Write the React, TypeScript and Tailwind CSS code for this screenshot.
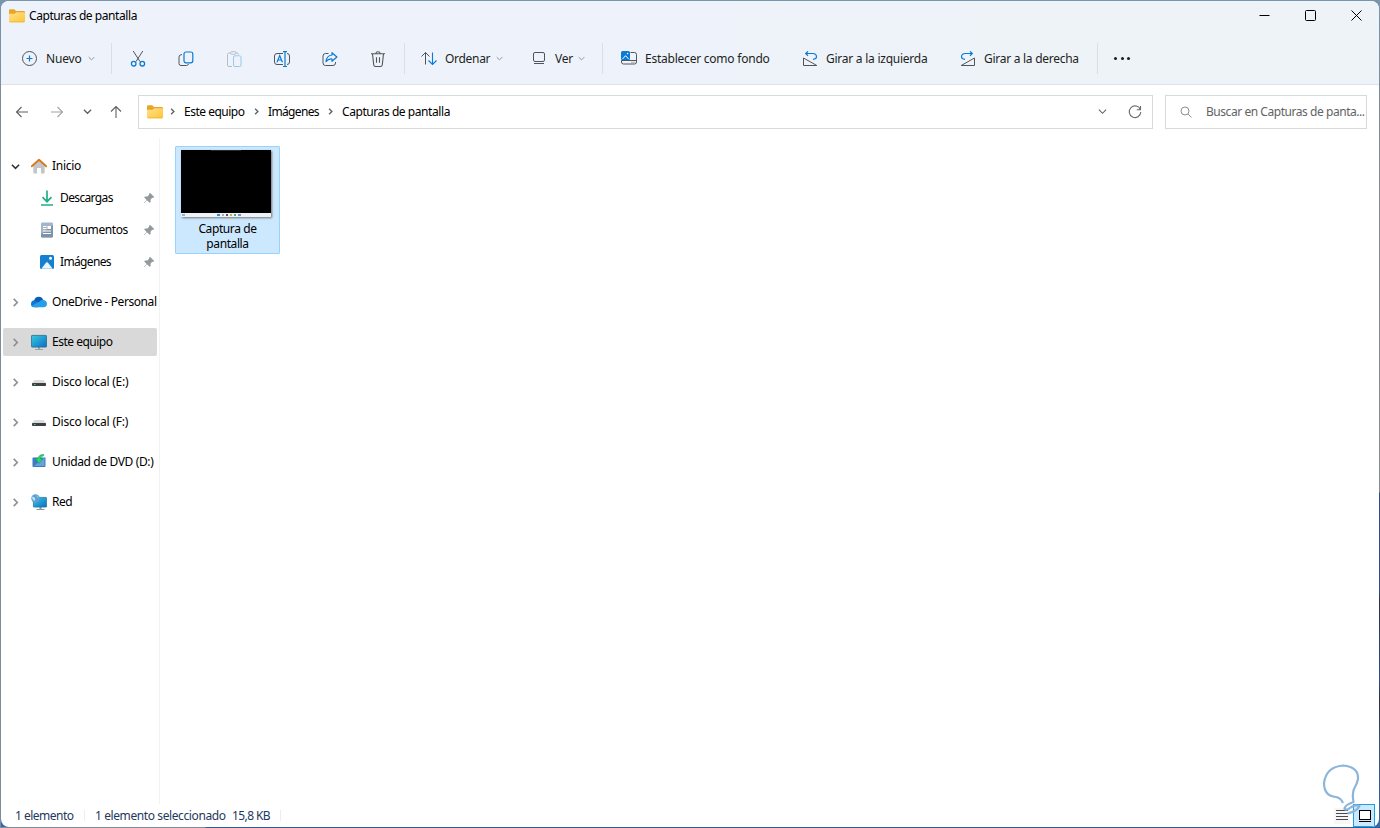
import type { ReactNode } from "react";
import clsx from "clsx";

const INK = "#50555a";
const BLUE = "#0a7bd4";

type IconProps = { className?: string };

function Chevron({ dir, className }: { dir: "down" | "right"; className?: string }) {
  return (
    <svg viewBox="0 0 10 10" fill="none" stroke="currentColor" className={clsx("shrink-0", className)}>
      <path d={dir === "down" ? "M1 3l4 4 4-4" : "M3 1l4 4-4 4"} />
    </svg>
  );
}

function FolderIcon({ className }: IconProps) {
  return (
    <svg viewBox="0 0 16 14" className={clsx("h-3.5 w-4 shrink-0", className)}>
      <defs>
        <linearGradient id="folder" x1="0" y1="0" x2="1" y2="1">
          <stop offset="0" stopColor="#ffe08a" />
          <stop offset="1" stopColor="#fdc637" />
        </linearGradient>
      </defs>
      <path d="M0 1.5Q0 .3 1.2.3h4L7 2h7.8Q16 2 16 3.2V10H0z" fill="#e8a526" />
      <path d="M0 4.7h5.6L7.3 3.2h7.5q1.2 0 1.2 1v8q0 1-1 1H1q-1 0-1-1z" fill="url(#folder)" />
      <path d="M.6 12.9h14.8" stroke="#e9b02f" strokeWidth=".7" />
    </svg>
  );
}

function Icon16({ children, className }: { children: ReactNode; className?: string }) {
  return (
    <svg viewBox="0 0 16 16" fill="none" className={clsx("h-4 w-4 shrink-0", className)}>
      {children}
    </svg>
  );
}

function NewIcon() {
  return (
    <Icon16>
      <circle cx="7.5" cy="7.5" r="7" stroke={INK} />
      <path d="M7.5 4.500v6M4.500 7.500h6" stroke={BLUE} strokeWidth="1.2" />
    </Icon16>
  );
}

function CutIcon() {
  return (
    <Icon16>
      <path d="M3.200 0l6.900 10.700M12.800 0L5.900 10.700" stroke={INK} />
      <circle cx="3.700" cy="12.700" r="2.300" stroke={BLUE} strokeWidth="1.3" />
      <circle cx="12.300" cy="12.700" r="2.300" stroke={BLUE} strokeWidth="1.3" />
    </Icon16>
  );
}

function CopyIcon() {
  return (
    <Icon16>
      <path d="M4 3.700H3q-2 .300-2 2.300v6.500q0 2 2 2h5.500q1.500 0 2-1.500" stroke={INK} />
      <rect x="6" y="1" width="8.800" height="10.800" rx="2" stroke={BLUE} strokeWidth="1.2" />
    </Icon16>
  );
}

function PasteIcon() {
  return (
    <Icon16>
      <path d="M4.500 2H3Q1.500 2 1.500 3.500V14q0 1.500 1.500 1.500h3M9.500 2H11q1.500 0 1.500 1.500" stroke="#b9bec2" />
      <rect x="4.500" y=".6" width="5.500" height="2.600" rx="1.2" stroke="#b9bec2" />
      <rect x="7.500" y="4.800" width="7.500" height="10.700" rx="1.500" stroke="#96c9ed" />
    </Icon16>
  );
}

function RenameIcon() {
  return (
    <Icon16>
      <path d="M9 2.500H3Q.5 2.500.5 5v6q0 2.500 2.500 2.500h6M13 2.500q2.500 0 2.500 2.500v6q0 2.500-2.500 2.500" stroke={INK} />
      <path d="M3 11.200L5.700 4.500l2.700 6.700M4 9h3.500" stroke={BLUE} strokeWidth="1.2" />
      <path d="M11 .8v14.400M9 .6h4M9 15.500h4" stroke={BLUE} strokeWidth="1.2" />
    </Icon16>
  );
}

function ShareIcon() {
  return (
    <Icon16>
      <path d="M6.500 2.500h-3Q1 2.500 1 5v7q0 2.500 2.500 2.500h7.500q2.500 0 2.500-2.500v-1" stroke={INK} />
      <path d="M10 1.700L14.900 6 10 10.300V8q-3.500-.5-6 2.700Q4.500 4.700 10 4z" stroke={BLUE} strokeWidth="1.2" strokeLinejoin="round" />
    </Icon16>
  );
}

function TrashIcon() {
  return (
    <Icon16>
      <path d="M1 2.700h14M5.800 2.500Q6 .7 8 .7t2.200 1.800M2.500 2.700l1.200 11q.2 1.800 2 1.800h4.600q1.800 0 2-1.800l1.200-11M6.500 6.200v5.600M9.500 6.200v5.600" stroke={INK} strokeWidth="1.1" />
    </Icon16>
  );
}

function SortIcon() {
  return (
    <Icon16>
      <path d="M4.500 13.500V1.500M.5 5.500l4-4 4 4" stroke={INK} />
      <path d="M11.500 1.500v12M7.500 9.500l4 4 4-4" stroke={BLUE} strokeWidth="1.1" />
    </Icon16>
  );
}

function ViewIcon() {
  return (
    <Icon16>
      <rect x="2.500" y="1.500" width="11" height="9" rx="1.500" stroke={INK} />
      <path d="M3 12.500h10" stroke={INK} />
    </Icon16>
  );
}

function WallpaperIcon() {
  return (
    <Icon16>
      <path d="M9.500 1.500h4q2 0 2 2V11q0 2-2 2h-11q-2 0-2-2v-1.500h15" stroke={INK} />
      <path d="M10.500 11.300h3" stroke={INK} strokeWidth=".8" strokeDasharray="1 1" />
      <rect width="9" height="9" rx="1.500" fill={BLUE} />
      <path d="M1.500 8l3-3.300L7.700 8" stroke="white" />
      <circle cx="6.600" cy="2.500" r=".8" fill="white" />
    </Icon16>
  );
}

function RotateIcon({ flip }: { flip?: boolean }) {
  return (
    <Icon16 className={flip ? "-scale-x-100" : ""}>
      <path d="M1.500 7v7.500h13.300z" stroke={INK} strokeLinejoin="round" />
      <path d="M6 .3L3.700 2.500 6 4.700M4 2.500h6.500q4 .2 4 3.200 0 2.300-3.500 2.600" stroke={BLUE} strokeWidth="1.2" />
    </Icon16>
  );
}

function Arrow({ className, rotate }: { className?: string; rotate?: string }) {
  return (
    <Icon16 className={clsx(className, rotate)}>
      <path d="M14 8H2.500M7.500 3L2.500 8l5 5" stroke="currentColor" strokeWidth="1.1" />
    </Icon16>
  );
}

function HomeIcon() {
  return (
    <Icon16>
      <path d="M2.300 7L8 2l5.700 5v7.300q0 1.200-1.200 1.200H10V10H6v5.500H3.500q-1.200 0-1.200-1.200z" fill="#c3c6c9" />
      <path d="M.8 8.300L8 1.800l7.200 6.500" stroke="#d9791f" strokeWidth="1.9" strokeLinecap="round" strokeLinejoin="round" />
    </Icon16>
  );
}

function DownloadIcon() {
  return (
    <Icon16>
      <path d="M8 .5v11M3.500 7.200L8 11.700l4.500-4.500M2 15h12" stroke="#1fae87" strokeWidth="1.7" />
    </Icon16>
  );
}

function DocumentIcon() {
  return (
    <Icon16>
      <rect x="2" y=".5" width="12" height="15" rx="1.2" fill="#a3b5c7" />
      <path d="M2 12L14 3v11.300q0 1.200-1.200 1.200H3.200Q2 15.500 2 14.300z" fill="#7d93aa" />
      <path d="M4 4.500h3.500M4 6.500h3.500M4 9h8M4 11.500h8" stroke="white" />
      <rect x="8.500" y="4" width="3.500" height="3" fill="white" />
    </Icon16>
  );
}

function PicturesIcon() {
  return (
    <Icon16>
      <rect x="1" y="1" width="14" height="14" rx="1.500" fill="#1480d1" />
      <path d="M2.500 14.400L7.200 8.600q.8-.9 1.600 0l4.700 5.800q-.5.300-1 .3h-9q-.5 0-1-.3z" fill="#e9f6ff" />
      <circle cx="11.500" cy="4.300" r="1.500" fill="white" />
    </Icon16>
  );
}

function CloudIcon() {
  return (
    <Icon16>
      <path d="M3 7Q4 2.800 7.800 2.800q3.200 0 4.400 3.200L9 11 2 9z" fill="#0a5cb8" />
      <path d="M0 10q0-3.400 3.600-3.700L10 10l-3 3.200H3.200Q0 13.200 0 10z" fill="#1277d2" />
      <path d="M9 7.200Q10.500 5.300 12.700 6 16 6.800 16 10q0 3-3.400 3.200H3.800Q2 13.200.8 11.800z" fill="#279fe8" />
    </Icon16>
  );
}

function MonitorIcon() {
  return (
    <Icon16>
      <defs>
        <linearGradient id="screen" x1="0" y1="0" x2="1" y2="1">
          <stop offset="0" stopColor="#36cbe0" />
          <stop offset="1" stopColor="#0c6ec4" />
        </linearGradient>
      </defs>
      <path d="M7 12.500h2V15h3v1H4v-1h3z" fill="#9aa3aa" />
      <rect x=".4" y="1.400" width="15.200" height="11.700" rx=".8" fill="url(#screen)" stroke="#226a93" strokeWidth=".8" />
    </Icon16>
  );
}

function DriveIcon() {
  return (
    <Icon16>
      <path d="M3.500 6h9L15 9.200H1z" fill="#d9dbdc" />
      <rect x="1" y="9" width="14" height="3" rx=".7" fill="#3d4144" />
      <rect x="3" y="10" width="1.500" height="1" fill="#39d37b" />
    </Icon16>
  );
}

function DvdIcon() {
  return (
    <Icon16>
      <path d="M2 3.500h12.500v8.700q0 .8-.8.800H2.300Q1.500 13 1.500 12.200V4z" fill="#3b7cc5" />
      <path d="M3 12L13.500 3.500V12z" fill="#69a2db" />
      <path d="M12.700.2Q8 .3 6.800 4.400L4.300 4.400l3.500 5 4-4.200-2.300-.3Q9.400 2.400 12.700 1.800z" fill="#2bd66a" stroke="#148246" strokeWidth=".4" />
    </Icon16>
  );
}

function NetworkIcon() {
  return (
    <Icon16>
      <path d="M8.500 12.500h2V15h3v1h-8v-1h3z" fill="#8e98a1" />
      <rect x="2.400" y="3.400" width="13.200" height="9.700" rx=".7" fill="url(#screen)" stroke="#226a93" strokeWidth=".7" />
      <circle cx="4.500" cy="4.500" r="4.200" fill="#5a9fd4" />
      <path d="M1 2.700q2-.2 3 1.300t-.7 3Q1 6 1 2.700zM5.500.8q-.5 2 2.400 3.700" fill="#c4e2f5" />
    </Icon16>
  );
}

function PinIcon() {
  return (
    <svg viewBox="0 0 12 12" className="h-3 w-3 shrink-0">
      <path d="M7 .8L11.200 5l-1.100 1-.9-.2-1.700 1.900.1 2.200-1 .9-2.500-2.500L1 11.300.7 11l3-3.100L1.200 5.400l.9-1 2.200.1L6.200 2.800 6 1.900z" fill="#939a9e" />
    </svg>
  );
}

function Divider() {
  return <div className="h-[31px] w-px shrink-0 bg-[#dadfe3]" />;
}

function Command({ icon, label, menu, className, labelClass }: {
  icon: ReactNode;
  label: string;
  menu?: boolean;
  className?: string;
  labelClass?: string;
}) {
  return (
    <button className={clsx("flex shrink-0 items-center whitespace-nowrap text-[#1d1f21]", className)}>
      {icon}
      <span className={clsx("ml-2 text-left", labelClass)}>{label}</span>
      {menu && <Chevron dir="down" className="ml-1.5 h-[7px] w-[7px] stroke-[1.4] text-[#8f9498]" />}
    </button>
  );
}

const tools = [CutIcon, CopyIcon, PasteIcon, RenameIcon, ShareIcon, TrashIcon];

function Toolbar() {
  return (
    <div className="flex h-[54px] items-center pt-[3px] text-[12px]">
      <Command icon={<NewIcon />} label="Nuevo" menu className="w-[110px] pl-[21px]" labelClass="w-[36px] tracking-[-0.15px]" />
      <Divider />
      <div className="flex w-[292px] items-center gap-8 pl-[18px]">
        {tools.map((Tool, i) => (
          <Tool key={i} />
        ))}
      </div>
      <Divider />
      <Command icon={<SortIcon />} label="Ordenar" menu className="w-[126px] pl-4" labelClass="w-[45px] tracking-[-0.3px]" />
      <Command icon={<ViewIcon />} label="Ver" menu className="w-[71px]" labelClass="w-[17px] tracking-[-0.3px]" />
      <Divider />
      <Command icon={<WallpaperIcon />} label="Establecer como fondo" className="w-[199px] pl-[18px]" labelClass="tracking-[-0.23px]" />
      <Command icon={<RotateIcon />} label="Girar a la izquierda" className="w-[158px]" labelClass="tracking-[-0.25px]" />
      <Command icon={<RotateIcon flip />} label="Girar a la derecha" className="w-[137px]" labelClass="tracking-[-0.27px]" />
      <Divider />
      <div className="flex gap-[3.5px] pl-4">
        <i className="h-[3px] w-[3px] rounded-full bg-[#1d1f21]" />
        <i className="h-[3px] w-[3px] rounded-full bg-[#1d1f21]" />
        <i className="h-[3px] w-[3px] rounded-full bg-[#1d1f21]" />
      </div>
    </div>
  );
}

function AddressRow() {
  return (
    <div className="flex h-[53px] shrink-0 items-center tracking-[-0.43px] text-[#5c6064]">
      <div className="flex w-[137px] items-center pl-[13px]">
        <Arrow />
        <Arrow rotate="rotate-180" className="ml-[19px] text-[#a0a4a8]" />
        <Chevron dir="down" className="ml-[18px] h-[9px] w-[9px] stroke-[1.4]" />
        <Arrow rotate="rotate-90" className="ml-4" />
      </div>
      <div className="flex h-[34px] w-[1015px] items-center border border-[#d9d9d9] pl-2 text-black">
        <FolderIcon />
        <Chevron dir="right" className="ml-[6px] h-[7px] w-[7px] stroke-2 text-[#606468]" />
        <span className="ml-2 w-[61px] whitespace-nowrap tracking-[-0.5px]">Este equipo</span>
        <Chevron dir="right" className="ml-2 h-[7px] w-[7px] stroke-2 text-[#606468]" />
        <span className="ml-2 w-[51px] whitespace-nowrap tracking-[-0.65px]">Imágenes</span>
        <Chevron dir="right" className="ml-2 h-[7px] w-[7px] stroke-2 text-[#606468]" />
        <span className="ml-2 whitespace-nowrap">Capturas de pantalla</span>
        <Chevron dir="down" className="mr-5 ml-auto h-[9px] w-[9px] stroke-[1.2] text-[#5c6064]" />
        <Icon16 className="mr-[9px]">
          <path d="M13.400 5.600A5.800 5.800 0 1 0 13.800 8M13.500 2v3.700H9.800" stroke="#666b70" strokeWidth="1.1" />
        </Icon16>
      </div>
      <div className="ml-3 flex h-[34px] w-[202px] items-center border border-[#d9d9d9] pl-[14px] text-[#636363]">
        <svg viewBox="0 0 12 12" fill="none" stroke="#8b8f99" className="h-3 w-3 shrink-0">
          <circle cx="5" cy="5" r="4" />
          <path d="M8 8l3.500 3.500" />
        </svg>
        <span className="ml-3.5 whitespace-nowrap tracking-[-0.45px]">Buscar en Capturas de panta...</span>
      </div>
    </div>
  );
}

const quickAccess = [
  { label: "Descargas", icon: <DownloadIcon />, tracking: "tracking-[-0.63px]" },
  { label: "Documentos", icon: <DocumentIcon />, tracking: "tracking-[-0.4px]" },
  { label: "Imágenes", icon: <PicturesIcon />, tracking: "tracking-[-0.65px]" },
];

const places = [
  { label: "OneDrive - Personal", icon: <CloudIcon />, tracking: "tracking-[-0.42px]" },
  { label: "Este equipo", icon: <MonitorIcon />, tracking: "tracking-[-0.5px]", active: true },
  { label: "Disco local (E:)", icon: <DriveIcon />, tracking: "tracking-[-0.22px]" },
  { label: "Disco local (F:)", icon: <DriveIcon />, tracking: "tracking-[-0.2px]" },
  { label: "Unidad de DVD (D:)", icon: <DvdIcon />, tracking: "tracking-[-0.37px]" },
  { label: "Red", icon: <NetworkIcon />, tracking: "tracking-[-0.5px]" },
];

function Sidebar() {
  return (
    <nav className="h-[666px] w-[159px] shrink-0 overflow-hidden border-r border-[#f2f2f2] pt-3 pl-0.5 whitespace-nowrap">
      <div className="flex h-8 items-center pl-2 tracking-[-0.28px]">
        <Chevron dir="down" className="h-[9px] w-[9px] stroke-[1.8] text-[#333]" />
        <span className="mr-[5px] ml-[11px]"><HomeIcon /></span>
        Inicio
      </div>
      {quickAccess.map((item) => (
        <div key={item.label} className="flex h-8 items-center pr-1 pl-9">
          {item.icon}
          <span className={clsx("mr-auto ml-[5px]", item.tracking)}>{item.label}</span>
          <PinIcon />
        </div>
      ))}
      <div className="mt-2.5 flex w-[154px] flex-col gap-3">
        {places.map((item) => (
          <div key={item.label} className={clsx("flex h-7 items-center rounded-xs pl-2", item.tracking, item.active && "bg-[#d9d9d9]")}>
            <Chevron dir="right" className="h-[9px] w-[9px] stroke-[1.8] text-[#8e8e8e]" />
            <span className="mr-[5px] ml-[11px]">{item.icon}</span>
            {item.label}
          </div>
        ))}
      </div>
    </nav>
  );
}

function FileTile() {
  return (
    <div className="mt-2 ml-[15px] flex h-[108px] w-[105px] flex-col items-center rounded-[1px] border border-[#99d1ff] bg-[#cce8ff] pt-[3px] pr-[3px]">
      <div className="flex h-[67px] w-[90px] flex-col bg-black shadow-[1px_1px_2px_#777]">
        <div className="mx-auto h-px w-[30px] bg-[#292929]" />
        <div className="mt-auto flex h-1 items-center justify-center gap-[2px] bg-[#eef1f5]">
          <i className="mr-auto ml-px h-0.5 w-[3px] bg-[#86b9e3]" />
          <i className="h-0.5 w-[3px] bg-[#368bce]" />
          <i className="h-0.5 w-0.5 bg-[#aaa]" />
          <i className="h-0.5 w-0.5 bg-[#555]" />
          <i className="h-0.5 w-0.5 bg-[#e4a931]" />
          <i className="h-0.5 w-0.5 bg-[#3faa9b]" />
          <i className="mr-auto h-0.5 w-[3px] bg-[#7499b6]" />
        </div>
      </div>
      <span className="mt-1 ml-[3px] w-[70px] text-center leading-[15px] tracking-[-0.4px]">Captura de pantalla</span>
    </div>
  );
}

function StatusBar() {
  return (
    <footer className="flex h-[23px] shrink-0 items-center pl-3.5 whitespace-nowrap tracking-[-0.4px] text-[#1e395b]">
      <span className="w-[69px] tracking-[-0.5px]">1 elemento</span>
      <i className="h-[11px] w-px bg-[#ededed]" />
      <span className="ml-[10px] w-[137px]">1 elemento seleccionado</span>
      <span className="w-[48px] tracking-[-0.6px]">15,8 KB</span>
      <i className="h-[11px] w-px bg-[#ededed]" />
      <div className="mr-1 ml-auto flex items-center">
        <div className="flex h-4 w-4 items-center justify-center bg-[#f7f7f7]">
          <svg viewBox="0 0 14 14" className="h-3.5 w-3.5" stroke="#4a4a4a">
            <path d="M1 1.500h12M1 4.500h12M1 7.500h12M1 10.500h12" />
          </svg>
        </div>
        <div className="ml-[3px] flex h-[23px] w-[22px] items-center justify-center border border-[#1ba1e2] bg-[#cce8ff] pl-px">
          <svg viewBox="0 0 14 14" fill="none" stroke="black" className="h-3.5 w-3.5">
            <rect x="1.500" y="1.500" width="11" height="9" fill="white" />
            <path d="M1 12.500h12" />
          </svg>
        </div>
      </div>
    </footer>
  );
}

export default function App() {
  return (
    <div className="relative h-[828px] w-[1380px] overflow-hidden bg-[linear-gradient(90deg,#7e8b98_205px,#2f5c93_206px)] font-['Noto_Sans',sans-serif] text-[12px] text-black">
      <div className="h-[827px] bg-[linear-gradient(180deg,#7895ad_0%,#7e8b98_15%)] pl-px">
        <div className="h-[827px] bg-[linear-gradient(180deg,#7895ad_0px,#7e8b98_120px,#858e96_492px,#2d4e8c_493px,#2d4e8c_590px,#2a3152_600px,#2d4e8c_680px,#2b3044_700px,#30507f_740px,#3569a8_827px)] pt-px">
          <div className="flex h-[826px] w-[1378px] flex-col overflow-hidden rounded-lg bg-white">
            <header className="h-[84px] shrink-0 border-b border-[#dce2e7] bg-linear-to-r from-[#eef3fb] from-50% to-[#eef3f8] to-75%">
              <div className="flex h-[29px] items-center pl-2">
                <FolderIcon />
                <span className="ml-1 whitespace-nowrap tracking-[-0.43px]">Capturas de pantalla</span>
                <div className="mr-[17px] mb-px ml-auto flex gap-[35px]">
                  <svg viewBox="0 0 11 11" className="h-[11px] w-[11px]" stroke="black"><path d="M.5 5.500h10" /></svg>
                  <svg viewBox="0 0 11 11" className="h-[11px] w-[11px]" stroke="black" fill="none"><rect x=".5" y=".5" width="10" height="10" rx="1" /></svg>
                  <svg viewBox="0 0 11 11" className="h-[11px] w-[11px]" stroke="black"><path d="M.5.5l10 10M10.500.5l-10 10" /></svg>
                </div>
              </div>
              <Toolbar />
            </header>
            <AddressRow />
            <main className="flex min-h-0 flex-1 items-start">
              <Sidebar />
              <FileTile />
            </main>
            <StatusBar />
          </div>
        </div>
      </div>
      <svg viewBox="0 0 60 64" fill="none" stroke="#8ab6dc" strokeWidth="2.2" strokeLinejoin="round" className="absolute top-[758px] left-[1312px] h-16 w-[60px]">
        <path d="M31 45q-2-5-7-6Q12 38 12 25 14 9 31 7.500 47 9 46 21q-1 5-4 10-2 5-.5 13-9 3-9 7 2 2 6-1.500 5-3.500 9-1.500-2 5-12 7.500" />
      </svg>
    </div>
  );
}
